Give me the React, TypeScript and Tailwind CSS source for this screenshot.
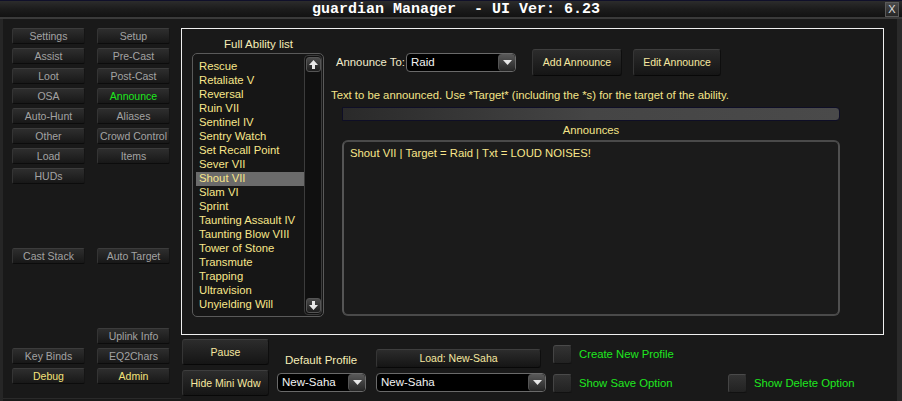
import React from "react";

const abilities = [
  "Rescue",
  "Retaliate V",
  "Reversal",
  "Ruin VII",
  "Sentinel IV",
  "Sentry Watch",
  "Set Recall Point",
  "Sever VII",
  "Shout VII",
  "Slam VI",
  "Sprint",
  "Taunting Assault IV",
  "Taunting Blow VIII",
  "Tower of Stone",
  "Transmute",
  "Trapping",
  "Ultravision",
  "Unyielding Will",
];

const topButtons: [string, string | null][] = [
  ["Settings", "Setup"],
  ["Assist", "Pre-Cast"],
  ["Loot", "Post-Cast"],
  ["OSA", "Announce"],
  ["Auto-Hunt", "Aliases"],
  ["Other", "Crowd Control"],
  ["Load", "Items"],
  ["HUDs", null],
];

function SideButton({ label, tone = "gray" }: { label: string; tone?: "gray" | "green" | "yellow" }) {
  const color =
    tone === "green" ? "text-[#1ee81e]" : tone === "yellow" ? "text-[#f4e27a]" : "text-[#a3a3a3]";
  return (
    <div
      className={`h-4 w-[73px] rounded-[2px] border border-t-[#3c3c3c] border-l-[#343434] border-r-[#151515] border-b-[#0c0c0c] bg-gradient-to-b from-[#2e2e2e] to-[#181818] flex items-center justify-center text-[10.5px] leading-none whitespace-nowrap ${color}`}
    >
      {label}
    </div>
  );
}

function BigButton({ label, className = "" }: { label: string; className?: string }) {
  return (
    <div
      className={`rounded-[3px] border border-t-[#3e3e3e] border-l-[#353535] border-r-[#0e0e0e] border-b-[#080808] bg-gradient-to-b from-[#2c2c2c] to-[#151515] flex items-center justify-center text-[10.5px] leading-none text-[#f6e8a0] whitespace-nowrap ${className}`}
    >
      {label}
    </div>
  );
}

function Dropdown({ value, className = "" }: { value: string; className?: string }) {
  return (
    <div
      className={`h-[19px] rounded-[4px] border border-[#6a6a6a] bg-black flex items-center justify-between pl-1 ${className}`}
    >
      <span className="text-[11.5px] leading-none text-[#f2f2f2]">{value}</span>
      <div className="h-[17px] w-[17px] rounded-[4px] border-l border-[#555] bg-gradient-to-b from-[#5a5a5a] to-[#262626] flex items-center justify-center">
        <svg width="9" height="5" viewBox="0 0 9 5">
          <path d="M0 0h9L4.5 5z" fill="#e6e6e6" />
        </svg>
      </div>
    </div>
  );
}

function Checkbox({ label }: { label: string }) {
  return (
    <div className="flex items-center gap-[7px]">
      <div className="h-[19px] w-[19px] rounded-[3px] border border-t-[#4a4a4a] border-l-[#444] border-r-[#181818] border-b-[#111] bg-gradient-to-b from-[#333] to-[#222]" />
      <span className="text-[11.3px] leading-none text-[#1fe81f] whitespace-nowrap">{label}</span>
    </div>
  );
}

function ScrollArrow({ up }: { up?: boolean }) {
  return (
    <div className="h-[15px] w-[15px] rounded-[3px] border border-[#555] bg-gradient-to-b from-[#4a4a4a] to-[#1e1e1e] flex items-center justify-center">
      <svg width="9" height="9" viewBox="0 0 9 9">
        {up ? (
          <path d="M4.5 0L9 5H6v4H3V5H0z" fill="#e8e8e8" />
        ) : (
          <path d="M4.5 9L9 4H6V0H3v4H0z" fill="#e8e8e8" />
        )}
      </svg>
    </div>
  );
}

export default function App() {
  return (
    <div
      className="w-[902px] h-[401px] overflow-hidden bg-[#191919] flex flex-col select-none"
      style={{ fontFamily: '"Liberation Sans", Arial, sans-serif' }}
    >
      {/* Title bar */}
      <div className="h-[17px] border-t border-[#10102a] bg-gradient-to-b from-[#2c2c2c] via-[#1c1c1c] to-[#121212] flex items-center relative">
        <div
          className="flex-1 text-center text-[15px] font-bold leading-none text-white whitespace-pre pl-[10px]"
          style={{ fontFamily: '"Liberation Mono", "DejaVu Sans Mono", monospace' }}
        >
          guardian Manager  - UI Ver: 6.23
        </div>
        <div className="absolute right-[3px] top-[1px] h-[15px] w-[14px] bg-gradient-to-b from-[#4a4a4a] to-[#262626] border border-[#5a5a5a] flex items-center justify-center text-[11px] leading-none text-[#dddddd]">
          X
        </div>
      </div>
      <div className="h-[2px] bg-[#3a3a3a]" />

      {/* Body */}
      <div className="flex-1 flex border-r-[5px] border-[#2a2a2a]">
        {/* Left panel */}
        <div className="w-[181px] border-l-[3px] border-[#262626] flex flex-col">
          <div className="pl-[9px] pt-[9px] grid grid-cols-[73px_73px] gap-x-3 gap-y-1">
            {topButtons.map(([a, b]) => (
              <React.Fragment key={a}>
                <SideButton label={a} />
                {b ? <SideButton label={b} tone={b === "Announce" ? "green" : "gray"} /> : <div />}
              </React.Fragment>
            ))}
          </div>
          <div className="pl-[9px] mt-[64px] flex gap-3">
            <SideButton label="Cast Stack" />
            <SideButton label="Auto Target" />
          </div>
          <div className="pl-[9px] mt-[64px] grid grid-cols-[73px_73px] gap-x-3 gap-y-1">
            <div />
            <SideButton label="Uplink Info" />
            <SideButton label="Key Binds" />
            <SideButton label="EQ2Chars" />
            <SideButton label="Debug" tone="yellow" />
            <SideButton label="Admin" tone="yellow" />
          </div>
          <div className="flex-1" />
          <div className="h-[3px] border-t border-[#2a2a2a]" />
        </div>

        {/* Right side */}
        <div className="flex-1 flex flex-col">
          {/* Framed panel */}
          <div className="mt-[9px] w-[703px] h-[307px] border border-[#f0f0f0] flex">
            {/* Ability list */}
            <div className="w-[143px] pl-[10px] flex flex-col">
              <div className="h-[24px] flex items-end justify-center pb-[3px] text-[11.5px] leading-none text-[#f6eeb8]">
                Full Ability list
              </div>
              <div className="h-[264px] w-[132px] rounded-[5px] border border-[#5a5a5a] bg-[#161616] flex">
                <div className="flex-1 pl-[3px] pt-[6px] flex flex-col">
                  {abilities.map((a) => (
                    <div
                      key={a}
                      className={`h-[14px] pl-[3px] flex items-center text-[11.3px] leading-none text-[#f8e68a] whitespace-nowrap ${
                        a === "Shout VII" ? "bg-[#6b6b6b]" : ""
                      }`}
                    >
                      {a}
                    </div>
                  ))}
                </div>
                <div className="w-[18px] mr-[1px] my-[1px] rounded-[4px] border border-[#3c3c3c] bg-[#101010] flex flex-col items-center justify-between py-[1px]">
                  <ScrollArrow up />
                  <ScrollArrow />
                </div>
              </div>
            </div>

            {/* Announce area */}
            <div className="flex-1 pl-[11px] flex flex-col">
              <div className="mt-[20px] flex items-center">
                <span className="text-[11.3px] leading-none text-[#f2eccc] w-[70px] whitespace-nowrap">Announce To:</span>
                <Dropdown value="Raid" className="w-[110px]" />
                <BigButton label="Add Announce" className="ml-[16px] w-[90px] h-[27px]" />
                <BigButton label="Edit Announce" className="ml-[11px] w-[88px] h-[27px]" />
              </div>
              <div className="-ml-[5px] mt-[14px] text-[11.3px] leading-none text-[#f4e488] whitespace-nowrap">
                Text to be announced. Use *Target* (including the *s) for the target of the ability.
              </div>
              <div className="mt-[6px] ml-[6px] w-[498px] h-[14px] border border-[#0e0e26] bg-gradient-to-r from-[#2a2a2a] via-[#454545] to-[#4a4a4a] rounded-r-[4px]" />
              <div className="ml-[6px] w-[498px] h-[19px] flex items-center justify-center text-[11.3px] leading-none text-[#f4e488]">
                Announces
              </div>
              <div className="ml-[6px] w-[498px] h-[176px] rounded-[6px] border-2 border-t-[#4a4a4a] border-l-[#555] border-r-[#505050] border-b-[#4a4a4a] bg-[#1b1b1b] px-[6px] pt-[6px]">
                <div className="text-[11.3px] leading-none text-[#f8e68a] whitespace-nowrap">
                  Shout VII | Target = Raid | Txt = LOUD NOISES!
                </div>
              </div>
            </div>
          </div>

          {/* Bottom controls */}
          <div className="flex pl-[1px] pt-[4px]">
            <div className="flex flex-col gap-[5px]">
              <BigButton label="Pause" className="w-[87px] h-[26px]" />
              <BigButton label="Hide Mini Wdw" className="w-[87px] h-[26px]" />
            </div>
            <div className="ml-[8px] flex flex-col">
              <div className="h-[27px] flex items-end pl-[8px] text-[11.5px] leading-none text-[#f6eeb8] whitespace-nowrap">
                Default Profile
              </div>
              <Dropdown value="New-Saha" className="mt-[7px] w-[89px]" />
            </div>
            <div className="ml-[10px] flex flex-col">
              <BigButton label="Load: New-Saha" className="mt-[10px] w-[165px] h-[19px]" />
              <Dropdown value="New-Saha" className="mt-[5px] w-[170px]" />
            </div>
            <div className="ml-[7px] flex flex-col gap-[10px] pt-[6px]">
              <Checkbox label="Create New Profile" />
              <div className="flex">
                <div className="w-[175px]">
                  <Checkbox label="Show Save Option" />
                </div>
                <Checkbox label="Show Delete Option" />
              </div>
            </div>
          </div>
        </div>
      </div>
    </div>
  );
}
